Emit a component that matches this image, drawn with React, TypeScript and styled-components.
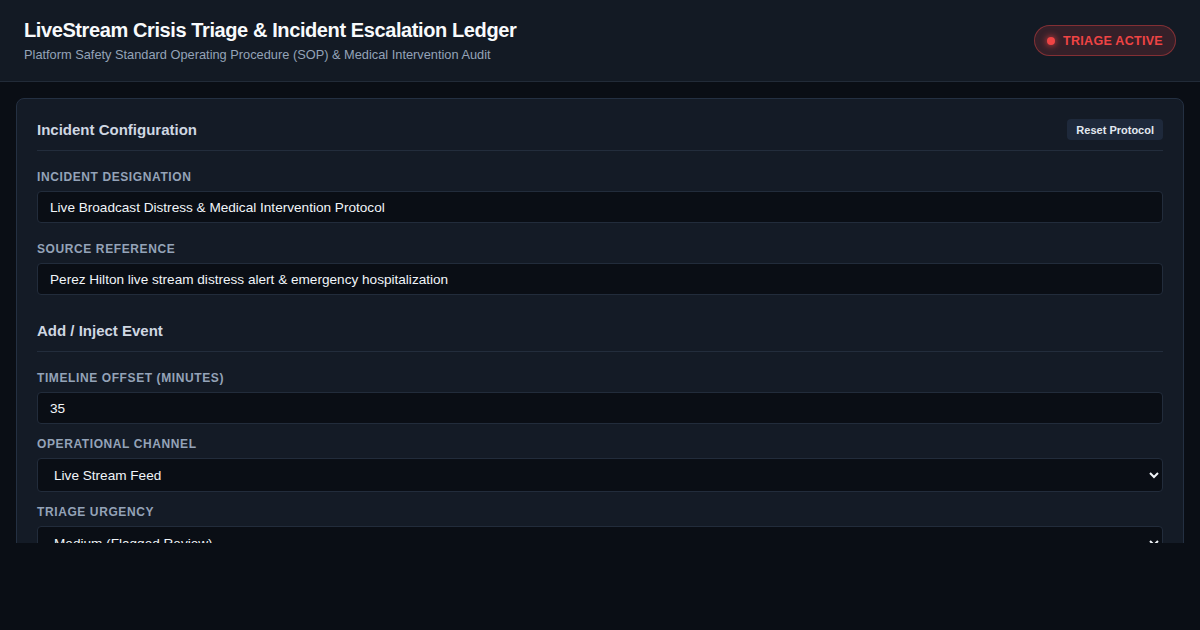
import React from "react";
import styled, { createGlobalStyle } from "styled-components";

const GlobalStyle = createGlobalStyle`
  * { box-sizing: border-box; }
  html, body {
    margin: 0;
    padding: 0;
    background: #0a0e15;
    font-family: "Liberation Sans", Arial, Helvetica, sans-serif;
    color: #e2e8f0;
  }
`;

const Shell = styled.div`
  display: flex;
  flex-direction: column;
  width: 100%;
`;

const Header = styled.header`
  height: 82px;
  display: flex;
  align-items: center;
  justify-content: space-between;
  padding: 0 24px;
  background: #131a24;
  border-bottom: 1px solid #222b38;
`;

const TitleBlock = styled.div`
  display: flex;
  flex-direction: column;
  gap: 3px;
`;

const Title = styled.h1`
  margin: 0;
  font-size: 20px;
  line-height: 26px;
  font-weight: 700;
  color: #f8fafc;
  letter-spacing: -0.4px;
`;

const Subtitle = styled.p`
  margin: 0;
  font-size: 12.8px;
  line-height: 18px;
  color: #94a3b8;
`;

const Badge = styled.div`
  display: flex;
  align-items: center;
  gap: 8px;
  height: 31px;
  padding: 0 12px;
  border-radius: 999px;
  background: rgba(239, 68, 68, 0.16);
  border: 1px solid rgba(239, 68, 68, 0.42);
  color: #ef4444;
  font-size: 12.5px;
  font-weight: 700;
  letter-spacing: 0.3px;
  text-transform: uppercase;
`;

const Dot = styled.span`
  width: 8px;
  height: 8px;
  border-radius: 50%;
  background: #ef4444;
  box-shadow: 0 0 6px 1px rgba(239, 68, 68, 0.7);
`;

const Main = styled.main`
  height: 461px;
  overflow: hidden;
  padding: 16px 16px 0;
  background: #0a0e15;
`;

const Card = styled.section`
  background: #141b26;
  border: 1px solid #243042;
  border-radius: 8px;
  padding: 20px;
`;

const SectionHeader = styled.div<{ $spaced?: boolean }>`
  display: flex;
  align-items: center;
  justify-content: space-between;
  min-height: 32px;
  padding-bottom: 10px;
  margin-top: ${(p) => (p.$spaced ? "25px" : "0")};
  margin-bottom: 18.5px;
  border-bottom: 1px solid #232d3c;
`;

const SectionTitle = styled.h2`
  margin: 0;
  font-size: 15px;
  line-height: 18px;
  font-weight: 700;
  color: #cfd7e2;
`;

const SmallButton = styled.button`
  height: 21px;
  padding: 0 9px;
  border: none;
  border-radius: 4px;
  background: #1e293b;
  color: #e2e8f0;
  font-family: inherit;
  font-size: 11px;
  font-weight: 700;
  cursor: pointer;
`;

const Field = styled.div<{ $gap: number }>`
  display: flex;
  flex-direction: column;
  margin-bottom: ${(p) => p.$gap}px;
`;

const Label = styled.label`
  display: block;
  font-size: 12px;
  line-height: 14px;
  font-weight: 700;
  letter-spacing: 0.6px;
  text-transform: uppercase;
  color: #94a3b8;
  margin-bottom: 7.5px;
`;

const Input = styled.input`
  width: 100%;
  height: 32px;
  padding: 0 12px;
  background: #0a0e15;
  border: 1px solid #222c3b;
  border-radius: 4px;
  color: #f1f5f9;
  font-family: inherit;
  font-size: 13.6px;
  outline: none;
`;

const Select = styled.select`
  width: 100%;
  height: 34px;
  padding: 0 8px 0 12px;
  background: #0a0e15;
  border: 1px solid #222c3b;
  border-radius: 4px;
  color: #f1f5f9;
  font-family: inherit;
  font-size: 13.6px;
  color-scheme: dark;
  outline: none;
`;

export default function App() {
  return (
    <>
      <GlobalStyle />
      <Shell>
        <Header>
          <TitleBlock>
            <Title>LiveStream Crisis Triage &amp; Incident Escalation Ledger</Title>
            <Subtitle>
              Platform Safety Standard Operating Procedure (SOP) &amp; Medical Intervention Audit
            </Subtitle>
          </TitleBlock>
          <Badge>
            <Dot />
            Triage Active
          </Badge>
        </Header>
        <Main>
          <Card>
            <SectionHeader>
              <SectionTitle>Incident Configuration</SectionTitle>
              <SmallButton>Reset Protocol</SmallButton>
            </SectionHeader>
            <Field $gap={18.5}>
              <Label>Incident Designation</Label>
              <Input defaultValue="Live Broadcast Distress & Medical Intervention Protocol" />
            </Field>
            <Field $gap={0}>
              <Label>Source Reference</Label>
              <Input defaultValue="Perez Hilton live stream distress alert & emergency hospitalization" />
            </Field>

            <SectionHeader $spaced>
              <SectionTitle>Add / Inject Event</SectionTitle>
            </SectionHeader>
            <Field $gap={12.5}>
              <Label>Timeline Offset (Minutes)</Label>
              <Input type="number" defaultValue="35" />
            </Field>
            <Field $gap={12.5}>
              <Label>Operational Channel</Label>
              <Select defaultValue="live">
                <option value="live">Live Stream Feed</option>
                <option value="social">Social Media</option>
                <option value="ems">Emergency Services</option>
              </Select>
            </Field>
            <Field $gap={12.5}>
              <Label>Triage Urgency</Label>
              <Select defaultValue="medium">
                <option value="low">Low (Monitoring)</option>
                <option value="medium">Medium (Flagged Review)</option>
                <option value="high">High (Immediate Escalation)</option>
              </Select>
            </Field>
          </Card>
        </Main>
      </Shell>
    </>
  );
}
